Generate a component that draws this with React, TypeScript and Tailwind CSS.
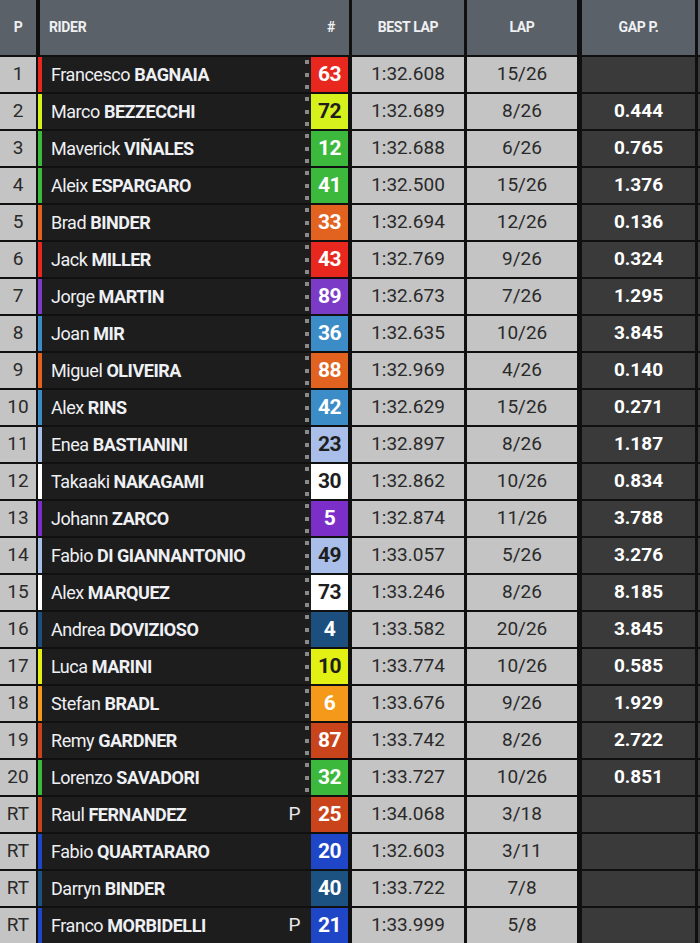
import React from "react";

type Row = {
  pos: string;
  first: string;
  last: string;
  num: string;
  color: string;
  dark?: boolean;
  best: string;
  lap: string;
  gap: string;
  pit?: boolean;
  rt?: boolean;
};

const rows: Row[] = [
  { pos: "1", first: "Francesco", last: "BAGNAIA", num: "63", color: "#e8281e", best: "1:32.608", lap: "15/26", gap: "" },
  { pos: "2", first: "Marco", last: "BEZZECCHI", num: "72", color: "#d6f11c", dark: true, best: "1:32.689", lap: "8/26", gap: "0.444" },
  { pos: "3", first: "Maverick", last: "VIÑALES", num: "12", color: "#3cb83c", best: "1:32.688", lap: "6/26", gap: "0.765" },
  { pos: "4", first: "Aleix", last: "ESPARGARO", num: "41", color: "#3cb83c", best: "1:32.500", lap: "15/26", gap: "1.376" },
  { pos: "5", first: "Brad", last: "BINDER", num: "33", color: "#e2621f", best: "1:32.694", lap: "12/26", gap: "0.136" },
  { pos: "6", first: "Jack", last: "MILLER", num: "43", color: "#e8281e", best: "1:32.769", lap: "9/26", gap: "0.324" },
  { pos: "7", first: "Jorge", last: "MARTIN", num: "89", color: "#7c3bc6", best: "1:32.673", lap: "7/26", gap: "1.295" },
  { pos: "8", first: "Joan", last: "MIR", num: "36", color: "#3c8cc8", best: "1:32.635", lap: "10/26", gap: "3.845" },
  { pos: "9", first: "Miguel", last: "OLIVEIRA", num: "88", color: "#e2621f", best: "1:32.969", lap: "4/26", gap: "0.140" },
  { pos: "10", first: "Alex", last: "RINS", num: "42", color: "#3c8cc8", best: "1:32.629", lap: "15/26", gap: "0.271" },
  { pos: "11", first: "Enea", last: "BASTIANINI", num: "23", color: "#a9bfe9", dark: true, best: "1:32.897", lap: "8/26", gap: "1.187" },
  { pos: "12", first: "Takaaki", last: "NAKAGAMI", num: "30", color: "#ffffff", dark: true, best: "1:32.862", lap: "10/26", gap: "0.834" },
  { pos: "13", first: "Johann", last: "ZARCO", num: "5", color: "#7c2fc8", best: "1:32.874", lap: "11/26", gap: "3.788" },
  { pos: "14", first: "Fabio", last: "DI GIANNANTONIO", num: "49", color: "#a9bfe9", dark: true, best: "1:33.057", lap: "5/26", gap: "3.276" },
  { pos: "15", first: "Alex", last: "MARQUEZ", num: "73", color: "#ffffff", dark: true, best: "1:33.246", lap: "8/26", gap: "8.185" },
  { pos: "16", first: "Andrea", last: "DOVIZIOSO", num: "4", color: "#1c4f7e", best: "1:33.582", lap: "20/26", gap: "3.845" },
  { pos: "17", first: "Luca", last: "MARINI", num: "10", color: "#e2f014", dark: true, best: "1:33.774", lap: "10/26", gap: "0.585" },
  { pos: "18", first: "Stefan", last: "BRADL", num: "6", color: "#f5991a", best: "1:33.676", lap: "9/26", gap: "1.929" },
  { pos: "19", first: "Remy", last: "GARDNER", num: "87", color: "#c9441b", best: "1:33.742", lap: "8/26", gap: "2.722" },
  { pos: "20", first: "Lorenzo", last: "SAVADORI", num: "32", color: "#3cb83c", best: "1:33.727", lap: "10/26", gap: "0.851" },
  { pos: "RT", first: "Raul", last: "FERNANDEZ", num: "25", color: "#c9441b", best: "1:34.068", lap: "3/18", gap: "", pit: true, rt: true },
  { pos: "RT", first: "Fabio", last: "QUARTARARO", num: "20", color: "#2046c8", best: "1:32.603", lap: "3/11", gap: "", rt: true },
  { pos: "RT", first: "Darryn", last: "BINDER", num: "40", color: "#1c5282", best: "1:33.722", lap: "7/8", gap: "", rt: true },
  { pos: "RT", first: "Franco", last: "MORBIDELLI", num: "21", color: "#2046c8", best: "1:33.999", lap: "5/8", gap: "", pit: true, rt: true },
];

export default function App() {
  return (
    <div
      className="w-[700px] h-[943px] overflow-hidden bg-[#101010]"
      style={{ fontFamily: "Roboto, 'Liberation Sans', sans-serif" }}
    >
      {/* header */}
      <div className="flex h-[55px] mb-[2px] text-[14px] font-bold text-[#eef0f2] tracking-tight">
        <div className="w-[36px] bg-[#5b6169] flex items-center justify-center">P</div>
        <div className="w-[4px]" />
        <div className="w-[309px] bg-[#5b6169] flex items-center justify-between pl-[9px] pr-[14px]">
          <span>RIDER</span>
          <span>#</span>
        </div>
        <div className="w-[3px]" />
        <div className="w-[112px] bg-[#5b6169] flex items-center justify-center">BEST LAP</div>
        <div className="w-[3px]" />
        <div className="w-[110px] bg-[#5b6169] flex items-center justify-center">LAP</div>
        <div className="w-[5px]" />
        <div className="w-[113px] bg-[#5b6169] flex items-center justify-center">GAP P.</div>
        <div className="w-[3px]" />
        <div className="w-[2px] bg-[#5b6169]" />
      </div>

      {rows.map((r, i) => (
        <div key={i} className="flex h-[35px] mb-[2px] text-[19px]">
          <div className="w-[36px] bg-[#c4c4c4] text-[#2a2a2a] flex items-center justify-center">{r.pos}</div>
          <div className="w-[2px]" />
          <div className="w-[4px]" style={{ background: r.color }} />
          <div className="w-[263px] bg-[#1d1d1d] flex items-center justify-between pl-[9px] pr-[5px] text-[18px] text-[#eef0f4] tracking-tight">
            <span>
              {r.first} <span className="font-bold">{r.last}</span>
            </span>
            {r.pit && <span className="text-[19px] text-[#e8e8e8]">P</span>}
          </div>
          <div className="w-[6px] bg-[#1d1d1d] flex flex-col justify-between py-[3px]">
            {!r.rt && (
              <>
                <div className="w-[4px] h-[4px] bg-[#8a8a8a]" />
                <div className="w-[4px] h-[4px] bg-[#8a8a8a]" />
                <div className="w-[4px] h-[4px] bg-[#8a8a8a]" />
              </>
            )}
          </div>
          <div
            className={`w-[37px] flex items-center justify-center text-[21px] font-bold tracking-tight ${r.dark ? "text-[#1e1e1e]" : "text-white"}`}
            style={{ background: r.color }}
          >
            {r.num}
          </div>
          <div className="w-[4px]" />
          <div className="w-[112px] bg-[#c4c4c4] text-[#2a2a2a] flex items-center justify-center">{r.best}</div>
          <div className="w-[3px]" />
          <div className="w-[110px] bg-[#c4c4c4] text-[#2a2a2a] flex items-center justify-center">{r.lap}</div>
          <div className="w-[5px]" />
          <div className="w-[113px] bg-[#3a3a3a] text-white font-bold flex items-center justify-center">{r.gap}</div>
          <div className="w-[3px]" />
          <div className="w-[2px] bg-[#3a3a3a]" />
        </div>
      ))}
    </div>
  );
}
